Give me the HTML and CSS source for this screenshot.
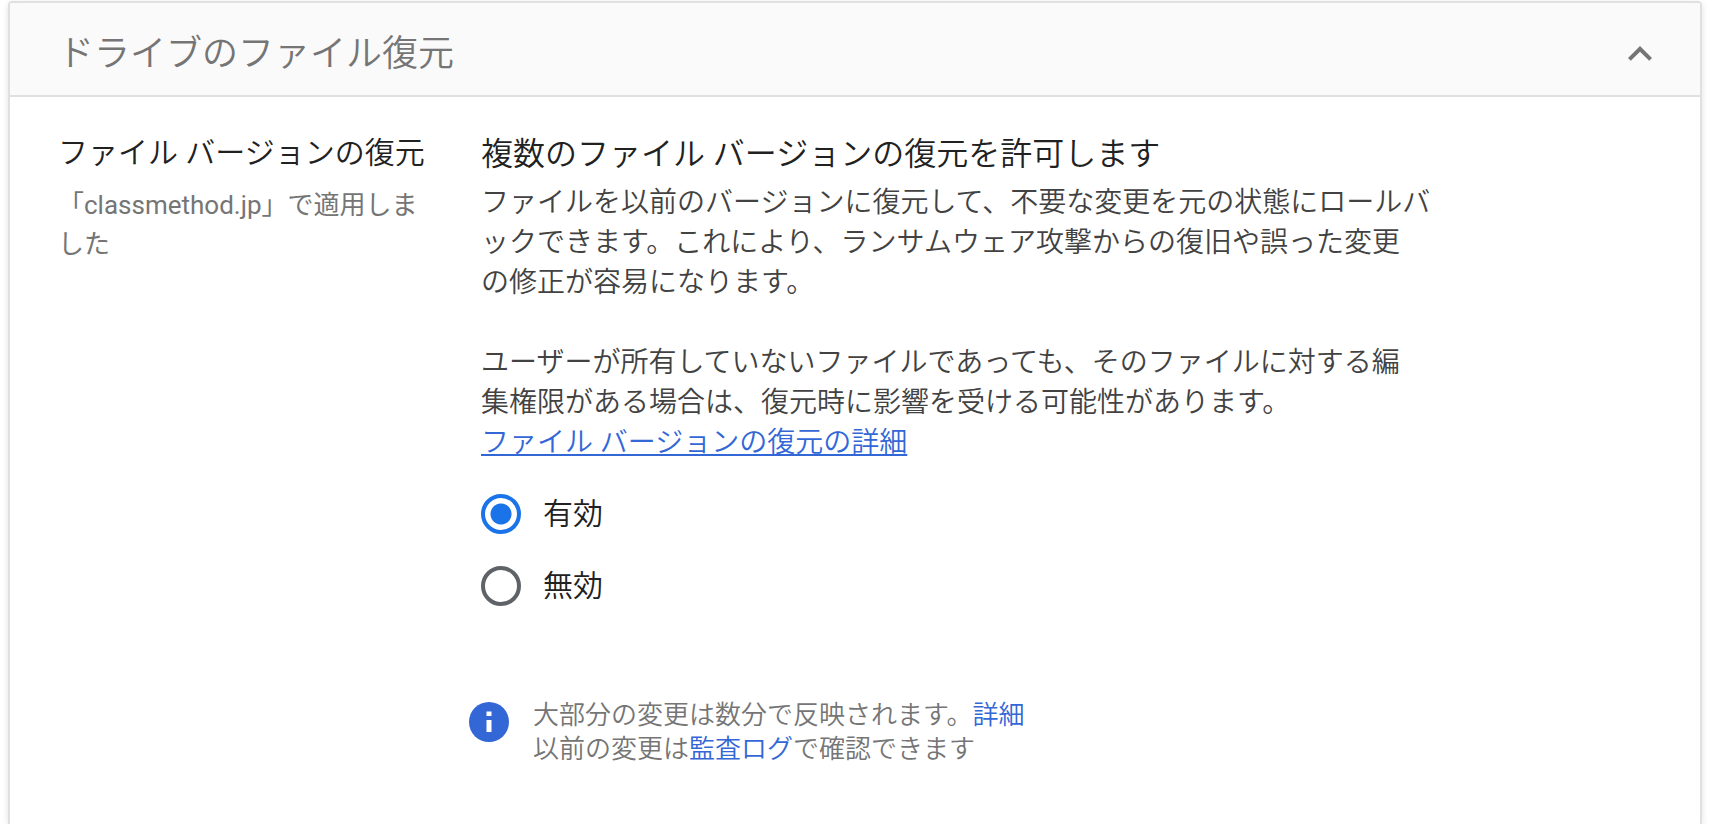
FILE: index.html
```html
<!DOCTYPE html>
<html lang="ja">
<head>
    <meta charset="UTF-8">
    <meta name="viewport" content="width=device-width, initial-scale=1.0">
    <title>ドライブのファイル復元</title>
    <link rel="stylesheet" href="styles.css">
</head>
<body>
    <main class="card">
        <header class="card-header">
            <h1>ドライブのファイル復元</h1>
            <button type="button" class="collapse-button" aria-label="閉じる" aria-expanded="true">
                <svg width="48" height="48" viewBox="0 0 24 24"><path d="M12 8l-6 6 1.41 1.41L12 10.83l4.59 4.58L18 14z"/></svg>
            </button>
        </header>

        <div class="card-body">
            <aside class="setting-info">
                <h2>ファイル バージョンの復元</h2>
                <p>「classmethod.jp」で適用しました</p>
            </aside>

            <section class="setting">
                <h2 id="setting-title">複数のファイル バージョンの復元を許可します</h2>
                <div class="description">
                    <p>ファイルを以前のバージョンに復元して、不要な変更を元の状態にロールバックできます。これにより、ランサムウェア攻撃からの復旧や誤った変更<br>の修正が容易になります。</p>
                    <p>ユーザーが所有していないファイルであっても、そのファイルに対する編<br>集権限がある場合は、復元時に影響を受ける可能性があります。<br><a href="#">ファイル バージョンの復元の詳細</a></p>
                </div>

                <div class="options" role="radiogroup" aria-labelledby="setting-title">
                    <label class="option"><input type="radio" name="restore" value="on" checked>有効</label>
                    <label class="option"><input type="radio" name="restore" value="off">無効</label>
                </div>

                <div class="notice">
                    <svg class="notice-icon" width="40" height="40" viewBox="0 0 40 40">
                        <circle cx="20" cy="20" r="20" fill="#3367d6"/>
                        <path d="M17.5 9.5h5v4.5h-5zM17.5 18h5v12h-5z" fill="#fff"/>
                    </svg>
                    <p>大部分の変更は数分で反映されます。<a href="#">詳細</a><br>以前の変更は<a href="#">監査ログ</a>で確認できます</p>
                </div>
            </section>
        </div>
    </main>
</body>
</html>
```

FILE: styles.css
```css
* {
    box-sizing: border-box;
}
body {
    margin: 0;
    padding: 1px 18px 0 8px;
    background-color: #ffffff;
    color: #212121;
    font-family: Roboto, "Noto Sans CJK JP", sans-serif;
    font-weight: 350;
}
h1, h2, p {
    margin: 0;
    font-weight: 350;
}
a {
    color: #3367d6;
    text-decoration: none;
}
.card {
    min-height: calc(100vh - 1px);
    border: 2px solid #e0e0e0;
    border-bottom: none;
    border-radius: 4px 4px 0 0;
    box-shadow: 0 2px 6px rgba(0,0,0,0.12);
}
.card-header {
    display: flex;
    align-items: center;
    justify-content: space-between;
    height: 94px;
    padding: 2px 36px 0 48px;
    background-color: #fafafa;
    border-bottom: 2px solid #e0e0e0;
    color: #757575;
}
.card-header h1 {
    font-size: 36px;
}
.collapse-button {
    padding: 8px 0 0;
    border: none;
    background: none;
    cursor: pointer;
}
.collapse-button svg {
    display: block;
    fill: #757575;
}
.card-body {
    display: flex;
    gap: 48px;
    padding: 32px 48px;
}
.setting-info {
    flex: 0 0 375px;
}
.setting-info h2 {
    font-size: 30px;
    line-height: 48px;
}
.setting-info p {
    margin-top: 9px;
    color: #757575;
    font-size: 26px;
    font-weight: 400;
    line-height: 39px;
}
.setting {
    flex: 1;
}
.setting h2 {
    font-size: 32px;
    line-height: 50px;
}
.description {
    max-width: 960px;
    margin-top: 4px;
    color: #424242;
    font-size: 28px;
    line-height: 40px;
}
.description p + p {
    margin-top: 40px;
}
.description a {
    text-decoration: underline;
    text-decoration-skip-ink: none;
}
.options {
    display: flex;
    flex-direction: column;
    gap: 24px;
    margin-top: 27px;
}
.option {
    display: flex;
    align-items: center;
    gap: 22px;
    align-self: flex-start;
    font-size: 30px;
    line-height: 48px;
}
.option input {
    appearance: none;
    width: 40px;
    height: 40px;
    margin: 0;
    border: 4px solid #5f6368;
    border-radius: 50%;
}
.option input:checked {
    border-color: #1a73e8;
    background: radial-gradient(circle closest-side, #1a73e8 10px, transparent 11px);
}
.notice {
    display: flex;
    align-items: flex-start;
    gap: 24px;
    margin: 88px 0 0 -12px;
    color: #757575;
    font-size: 26px;
    line-height: 34px;
}
.notice-icon {
    flex: none;
    margin-top: 4px;
}
```
